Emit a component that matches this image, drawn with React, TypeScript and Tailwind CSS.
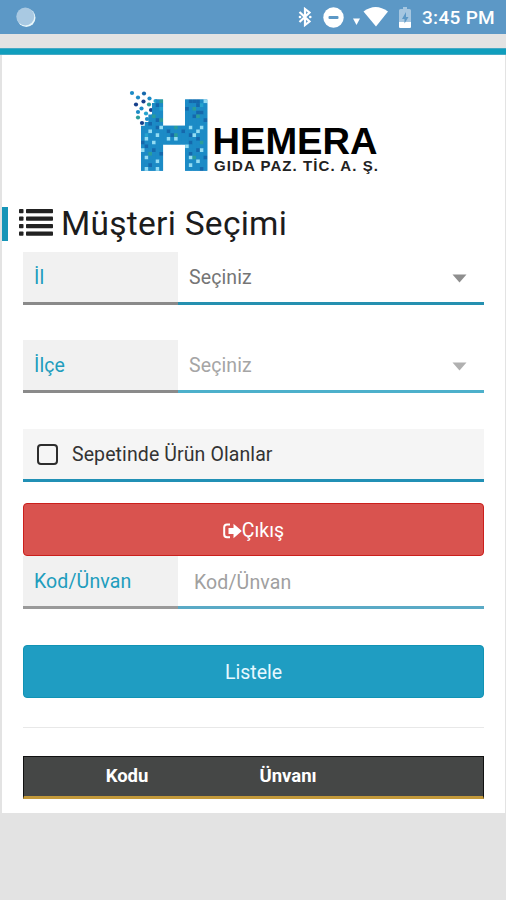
import React from "react";

const COLORS: Record<string, string> = {
  b: "#1c8bc6",
  d: "#1568ac",
  c: "#24a3cf",
  g: "#2b9d9a",
  l: "#93dcf3",
  n: "#153f8b",
};

// mosaic of the logo letter, one character per tile
const TILES = [
  "....bg......bdddbl",
  "...bdb......bbbdcb",
  "...bbc......dbgbbb",
  "...bbb......bbbddb",
  "..bgbb......bbdgbb",
  "..bbdg......bbbbbd",
  ".bdbbb......bbbbbb",
  "bbbbdlbbbgbbblbblb",
  "bblbbbbdbbbdbbblbb",
  "bcbblbbbdgbbbdlbbb",
  "blbbbbblblbbbbbdbb",
  "dbblbbbbbbbbbdbbgb",
  "bdbbbb......lbbbbb",
  "lbbdbb......bbbdlb",
  "bbgbbd......bdbbbb",
  "blbbbb......blgbbd",
  "bbbblb......bbblbb",
  "bbdbbb......blbbbb",
  "blbblb......bbbbdb",
];

const DOTS = [
  [5, 3, "b"],
  [17, 3.5, "d"],
  [11, 7.5, "b"],
  [22.5, 8.5, "b"],
  [16.5, 11.5, "n"],
  [28.5, 11, "c"],
  [9, 14.5, "n"],
  [22, 14.5, "g"],
  [14.5, 18.5, "b"],
  [24, 20, "n"],
  [29, 17, "b"],
  [11, 22, "b"],
  [19, 23.5, "c"],
  [11, 27.5, "g"],
  [20, 29, "b"],
  [15, 33, "n"],
  [26, 26, "b"],
] as const;

function Logo() {
  return (
    <svg width="256" height="88" viewBox="0 0 256 88" className="block">
      {DOTS.map(([x, y, c]) => (
        <circle key={x + "-" + y} cx={x - 1} cy={y} r="2.1" fill={COLORS[c]} />
      ))}
      <path
        d="M28 9.500h7v26.200h22V9.500h22.300v71.200H57V54.500H35v26.200H13V36h4V32h4V25h3V13h4z"
        fill="#1c8bc6"
      />
      {TILES.map((row, y) =>
        row
          .split("")
          .map((c, x) =>
            c === "." ? null : (
              <rect
                key={x + "-" + y}
                x={13 + x * 3.68}
                y={9.5 + y * 3.75}
                width="3.7"
                height="3.75"
                fill={COLORS[c]}
              />
            )
          )
      )}
      <text
        x="84.5"
        y="63.500"
        textLength="165"
        lengthAdjust="spacingAndGlyphs"
        fontSize="37"
        fontWeight="700"
        fontFamily="Liberation Sans, sans-serif"
      >
        HEMERA
      </text>
      <text
        x="86"
        y="81"
        textLength="164"
        fontSize="15"
        fontWeight="700"
        fill="#222"
        fontFamily="Liberation Sans, sans-serif"
      >
        GIDA PAZ. TİC. A. Ş.
      </text>
    </svg>
  );
}

function StatusBar() {
  return (
    <div className="flex items-center h-[34px] bg-[#5c98c6] pl-4 pr-[11px] text-white">
      <svg width="20" height="20" viewBox="0 0 20 20">
        <circle cx="10.3" cy="10.700" r="9.2" fill="#e9f7fa" />
        <circle cx="9.300" cy="9.500" r="9" fill="#a9c9e2" />
      </svg>
      <svg className="ml-auto" width="14" height="20" viewBox="0 0 14 20">
        <path
          d="M1.500 5L11.500 14.500L7 18V2L11.500 5.500L1.500 15"
          fill="none"
          stroke="#fff"
          strokeWidth="2.2"
        />
        <circle cx="2" cy="10" r="1.300" fill="#fff" />
        <circle cx="12.300" cy="10" r="1.300" fill="#fff" />
      </svg>
      <svg className="ml-[11px]" width="21" height="21" viewBox="0 0 21 21">
        <circle cx="10.5" cy="10.5" r="10.2" fill="#fff" />
        <rect x="5.5" y="9" width="10" height="3" rx="1" fill="#5c98c6" />
      </svg>
      <svg className="ml-[8px]" width="36" height="20" viewBox="0 0 36 20">
        <path d="M1 11.5h7L4.5 18z" fill="#fff" />
        <path d="M11.5 4.5Q23.5 -4.5 36 4.5L24 19.5z" fill="#fff" />
      </svg>
      <svg className="ml-[11px]" width="12" height="21" viewBox="0 0 12 21">
        <path
          d="M4 0h4v2h2.5q1.500 0 1.500 1.500V19.500q0 1.500-1.500 1.500h-9Q0 21 0 19.500V3.500Q0 2 1.500 2H4z"
          fill="#a5c6e0"
        />
        <path
          d="M0 15h12v4.500q0 1.500-1.500 1.500h-9Q0 21 0 19.500z"
          fill="#fff"
        />
        <path d="M7 5L3 12h2.500v4.500L9.500 10H7z" fill="#5c98c6" />
      </svg>
      <span className="ml-[11px] w-[73px] whitespace-nowrap text-[19px] tracking-[0.3px] leading-[34px] font-medium pt-[2px]">
        3:45 PM
      </span>
    </div>
  );
}

interface IFieldProps {
  label: string;
  children: React.ReactNode;
  line: string;
  labelLine: string;
}

function Field({ label, children, line, labelLine }: IFieldProps) {
  return (
    <div className="flex h-[53px] text-[19.5px] tracking-[0.12px]">
      <div
        className={
          "w-[155px] bg-[#f1f1f1] border-b-[3px] pl-[11px] leading-[52px] text-[#219dbd] " +
          labelLine
        }
      >
        {label}
      </div>
      <div
        className={
          "flex flex-1 items-center justify-between border-b-[3px] pl-[11px] pr-[17px] pt-[2px] " +
          line
        }
      >
        {children}
      </div>
    </div>
  );
}

function Caret({ color }: { color: string }) {
  return (
    <svg width="15" height="9" viewBox="0 0 15 9">
      <path d="M.5 .5h14L7.500 8.500z" fill={color} />
    </svg>
  );
}

export default function App() {
  return (
    <div className="h-[900px] bg-[#e3e3e3] font-['Roboto',sans-serif] overflow-hidden">
      <StatusBar />
      <div className="mt-[14px] h-[7px] border-y border-[#45a9c4] bg-[#109ebd]"></div>
      <div className="ml-[2px] mr-px h-[758px] bg-white">
        <div className="pt-[35px] pl-[126px]">
          <Logo />
        </div>
        <div className="flex items-center mt-[29px] h-[34px] border-l-[6px] border-[#1695b8] pl-[11px]">
          <svg
            width="34"
            height="27"
            viewBox="0 0 34 27"
            fill="#222"
            className="-mt-[3px]"
          >
            {[0, 7.5, 15, 22.5].map((y) => (
              <g key={y}>
                <rect x="0" y={y} width="4.5" height="4.2" rx=".8" />
                <rect x="7" y={y} width="27" height="4.2" rx=".8" />
              </g>
            ))}
          </svg>
          <h1 className="ml-[8px] text-[33.5px] leading-[34px] tracking-[0.27px] text-[#1c1c1c]">
            Müşteri Seçimi
          </h1>
        </div>
        <div className="mt-[11px] ml-[21px] mr-[21px]">
          <Field
            label="İl"
            line="border-[#2590b0]"
            labelLine="border-[#8a8a8a]"
          >
            <span className="text-[#757575]">Seçiniz</span>
            <Caret color="#8e8e8e" />
          </Field>
          <div className="mt-[35px]">
            <Field
              label="İlçe"
              line="border-[#4db0cb]"
              labelLine="border-[#8a8a8a]"
            >
              <span className="text-[#a5a5a5]">Seçiniz</span>
              <Caret color="#b0b0b0" />
            </Field>
          </div>
          <label className="flex items-center mt-[36px] h-[53px] border-b-[3px] border-[#2190b5] bg-[#f5f5f5] pl-[14px] text-[19.5px] tracking-[0.1px] text-[#333]">
            <span className="w-[21px] h-[21px] rounded-[4px] border-2 border-[#2d2d2d]"></span>
            <span className="ml-[14px] pt-px">Sepetinde Ürün Olanlar</span>
          </label>
          <button
            type="button"
            className="flex items-center justify-center mt-[21px] h-[53px] w-full rounded-[4px] border border-[#cb1f1c] bg-[#d9534f] pt-[2px] text-[19.5px] text-white"
          >
            <svg width="19" height="16" viewBox="0 0 19 16">
              <path
                d="M7 1.500H4Q1.200 1.500 1.200 4.300V11.500Q1.200 14.300 4 14.300H7"
                fill="none"
                stroke="#fff"
                strokeWidth="2"
              />
              <path
                d="M5.500 5H10.500V.8L18.800 8L10.500 15.200V11H5.500z"
                fill="#fff"
              />
            </svg>
            Çıkış
          </button>
          <Field
            label="Kod/Ünvan"
            line="border-[#5aaac6]"
            labelLine="border-[#9a9a9a]"
          >
            <span className="pl-[5px] pt-px text-[#a0a0a0]">Kod/Ünvan</span>
          </Field>
          <button
            type="button"
            className="block mt-[36px] h-[53px] w-full rounded-[4px] border border-[#1193b4] bg-[#1f9dc2] pt-[2px] text-[19.5px] text-[#e6f8ff]"
          >
            Listele
          </button>
          <hr className="mt-[29px] border-t border-[#e8e8e8]" />
          <div className="flex mt-[28px] h-[43px] border border-[#111] border-b-[3px] border-b-[#c3993a] bg-[#454746] pl-px text-[18.5px] leading-[39px] font-bold text-white">
            <div className="w-[204px] text-center">Kodu</div>
            <div className="w-[118px] text-center">Ünvanı</div>
          </div>
        </div>
      </div>
    </div>
  );
}
